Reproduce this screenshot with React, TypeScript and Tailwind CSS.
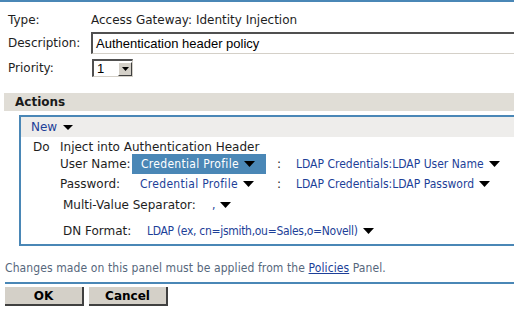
import React from 'react';

const Caret = ({ w = 11, h = 6 }: { w?: number; h?: number }) => (
  <svg width={w} height={h} viewBox={`0 0 ${w} ${h}`} className="shrink-0">
    <path d={`M0 0h${w}L${w / 2} ${h}z`} fill="#000" />
  </svg>
);

// narrower face for the blue link texts and the footer note
const narrow = "font-['DejaVu_Sans_Condensed','DejaVu_Sans',sans-serif] [font-stretch:condensed]";

function DropLink({ label, className = '' }: { label: string; className?: string }) {
  return (
    <span className={`inline-flex items-center gap-[5px] whitespace-nowrap text-[#1d3f98] ${narrow} ${className}`}>
      {label}
      <Caret />
    </span>
  );
}

const boxFont = { fontFamily: '"Liberation Sans", Arial, sans-serif', fontSize: 13 };

export default function App() {
  return (
    <div
      className="w-[514px] h-[311px] overflow-hidden bg-white text-[12px] text-[#1e1e1e] whitespace-nowrap"
      style={{ fontFamily: '"DejaVu Sans", Verdana, sans-serif' }}
    >
      <div className="h-[2px] bg-[#4a87b6]" />

      {/* form rows */}
      <div className="flex flex-col pl-[8px]">
        <div className="flex items-center h-[30px] pt-[6px]">
          <span className="w-[83px]">Type:</span>
          <span>Access Gateway: Identity Injection</span>
        </div>
        <div className="flex items-center h-[22px]">
          <span className="w-[83px] shrink-0">Description:</span>
          <div
            className="flex-1 h-[22px] flex items-center pl-[3px] border-t-2 border-l-2 border-t-[#505050] border-l-[#505050] border-b border-b-[#d4d0c8] text-black"
            style={boxFont}
          >
            Authentication header policy
          </div>
        </div>
        <div className="flex items-center h-[18px] mt-[5px]">
          <span className="w-[84px]">Priority:</span>
          <div className="flex items-center w-[41px] h-[18px] border-t-2 border-l-2 border-t-[#505050] border-l-[#505050] border-b border-r border-[#d4d0c8] bg-white">
            <span className="flex-1 pl-[3px] text-black" style={boxFont}>1</span>
            <span className="w-[14px] h-[14px] flex items-center justify-center bg-[#d4d0c8] border-r border-b border-[#404040] border-t border-l border-t-white border-l-white">
              <svg width="7" height="4" viewBox="0 0 7 4"><path d="M0 0h7L3.5 4z" fill="#000" /></svg>
            </span>
          </div>
        </div>
      </div>

      {/* actions header */}
      <div className="ml-[4px] mt-[16px] h-[18px] bg-[#e0ddd6] flex items-center pl-[11px] font-bold text-[#1a1a1a]">
        Actions
      </div>

      {/* action panel */}
      <div className="ml-[19px] mt-[4px] border-2 border-r-0 border-[#4a87b6]">
        <div className="h-[20px] bg-[#eeedeb] flex items-center pl-[10px]">
          <span className="inline-flex items-center gap-[6px] text-[#1d3f98]">
            New
            <Caret w={10} h={5} />
          </span>
        </div>
        <div className="pl-[12px] pt-[2px]">
          <div className="flex items-center h-[15px]">
            <span className="w-[27px]">Do</span>
            <span>Inject into Authentication Header</span>
          </div>
          <div className="flex items-center h-[20px] pl-[27px]">
            <span className="w-[72px] shrink-0">User Name:</span>
            <span className={`w-[134px] shrink-0 h-[20px] bg-[#4a87b6] text-white flex items-center pl-[9px] gap-[5px] tracking-[0.3px] ${narrow}`}>
              Credential Profile
              <Caret />
            </span>
            <span className="w-[30px] shrink-0 pl-[11px]">:</span>
            <DropLink label="LDAP Credentials:LDAP User Name" />
          </div>
          <div className="flex items-center h-[19px] pl-[27px]">
            <span className="w-[72px] shrink-0">Password:</span>
            <span className="w-[134px] shrink-0 pl-[8px]">
              <DropLink label="Credential Profile" className="tracking-[0.3px]" />
            </span>
            <span className="w-[30px] shrink-0 pl-[11px]">:</span>
            <DropLink label="LDAP Credentials:LDAP Password" />
          </div>
          <div className="flex items-center h-[24px] pl-[30px]">
            <span className="w-[149px] shrink-0">Multi-Value Separator:</span>
            <DropLink label="," className="gap-[4px]" />
          </div>
          <div className="flex items-center h-[27px] pl-[30px]">
            <span className="w-[84px] shrink-0">DN Format:</span>
            <DropLink label="LDAP (ex, cn=jsmith,ou=Sales,o=Novell)" className="tracking-[-0.3px]" />
          </div>
        </div>
      </div>

      {/* footer */}
      <p className={`pl-[5px] mt-[14px] h-[16px] leading-[16px] text-[#56677c] tracking-[0.1px] ${narrow}`}>
        Changes made on this panel must be applied from the{' '}
        <span className="text-[#1d3f98] underline">Policies</span> Panel.
      </p>
      <div className="ml-[5px] mt-[6px] h-[2px] bg-[#4a87b6]" />
      <div className="flex gap-[5px] pl-[5px] pt-[3px]">
        <button className="w-[79px] h-[19px] bg-[#d4d0c8] border-r-2 border-b-2 border-[#404040] font-bold text-black text-[12px] leading-none">
          OK
        </button>
        <button className="w-[79px] h-[19px] bg-[#d4d0c8] border-r-2 border-b-2 border-[#404040] font-bold text-black text-[12px] leading-none">
          Cancel
        </button>
      </div>
    </div>
  );
}
